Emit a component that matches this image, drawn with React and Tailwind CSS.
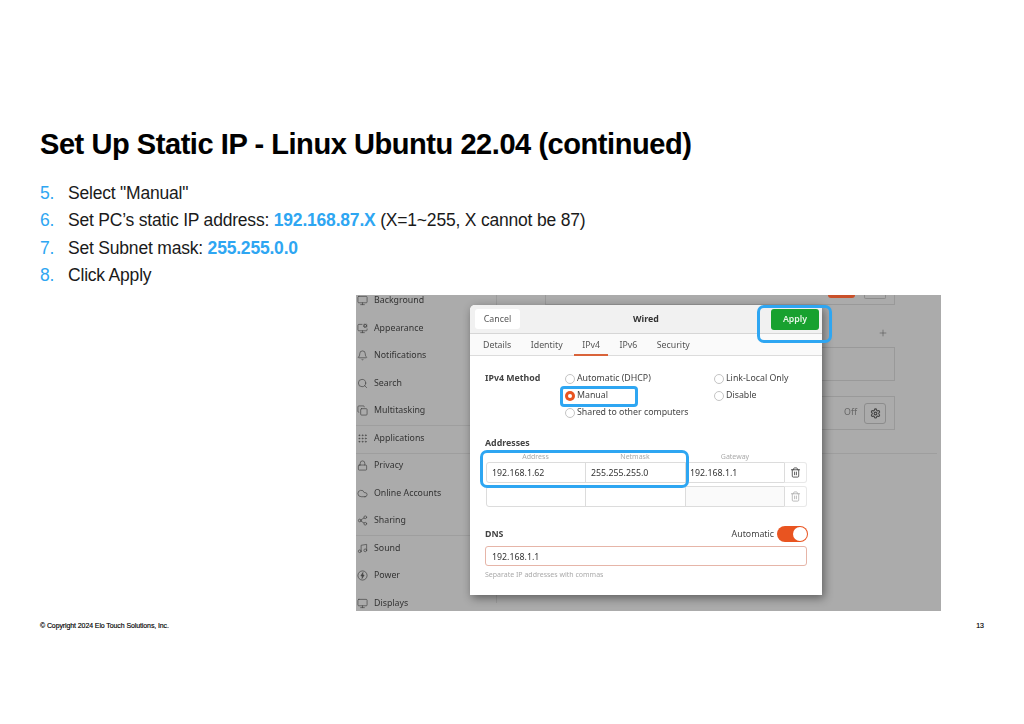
import { Bell, Cloud, Copy, Grip, Lock, Monitor, MonitorCog, Music, Plus, Search, Settings, Share2, Trash2 } from 'lucide-react'

const steps = [
  { n: '5.', body: <>Select "Manual"</> },
  {
    n: '6.',
    body: (
      <>
        Set PC’s static IP address: <b className="font-bold text-[#2ea6f2]">192.168.87.X</b> (X=1~255, X cannot be 87)
      </>
    ),
  },
  { n: '7.', body: <>Set Subnet mask: <b className="font-bold text-[#2ea6f2]">255.255.0.0</b></> },
  { n: '8.', body: <>Click Apply</> },
]

function PowerIcon({ size, className }) {
  return (
    <svg width={size} height={size} viewBox="0 0 24 24" fill="none" stroke="currentColor" strokeWidth="1.6" className={className}>
      <circle cx="12" cy="12" r="10" />
      <path d="M13 5.5 8.5 13H12l-1 5.5 4.5-7.5H12z" fill="currentColor" />
    </svg>
  )
}

const sidebar = [
  { label: 'Background', icon: Monitor },
  { label: 'Appearance', icon: MonitorCog },
  { label: 'Notifications', icon: Bell },
  { label: 'Search', icon: Search },
  { label: 'Multitasking', icon: Copy },
  { label: 'Applications', icon: Grip, divider: true },
  { label: 'Privacy', icon: Lock },
  { label: 'Online Accounts', icon: Cloud },
  { label: 'Sharing', icon: Share2 },
  { label: 'Sound', icon: Music, divider: true },
  { label: 'Power', icon: PowerIcon },
  { label: 'Displays', icon: Monitor },
]

function Radio({ checked, label }) {
  return (
    <div className="flex items-center gap-[2px] h-[17px]">
      {checked ? (
        <span className="w-[10px] h-[10px] rounded-full bg-[#e95420] flex items-center justify-center">
          <span className="w-[4px] h-[4px] rounded-full bg-white" />
        </span>
      ) : (
        <span className="w-[10px] h-[10px] rounded-full border border-[#c4c4c4] bg-white" />
      )}
      <span>{label}</span>
    </div>
  )
}

function AddressRow({ values, faded }) {
  return (
    <div className="flex h-[21px]">
      <div className="flex flex-1 rounded-l-[3px] border border-[#dcdcdc] text-[8.8px] text-[#333]">
        <div className="w-[99px] border-r border-[#dcdcdc] pl-[5px] leading-[20px]">{values[0]}</div>
        <div className="w-[100px] border-r border-[#dcdcdc] pl-[5px] leading-[20px]">{values[1]}</div>
        <div className={`flex-1 pl-[4px] leading-[20px] ${faded ? 'bg-[#fafafa]' : ''}`}>{values[2]}</div>
      </div>
      <div className="w-[22px] border border-l-0 border-[#e8e8e8] rounded-r-[3px] flex items-center justify-center">
        <Trash2 size={11} strokeWidth={1.7} className={faded ? 'text-[#aaa]' : 'text-[#333]'} />
      </div>
    </div>
  )
}

function WiredDialog() {
  return (
    <div className="absolute left-[114px] top-[10px] w-[352px] h-[290px] bg-white rounded-t-[5px] shadow-[2px_3px_10px_rgba(0,0,0,0.45)] text-[#444] text-[8.8px]">
      <div className="relative flex items-center justify-between h-[29px] pl-[5px] pr-[3px] bg-[#f1f1f1] border-b border-[#d6d6d6] rounded-t-[5px]">
        <div className="w-[45px] h-[20px] pt-[2px] rounded-[3px] bg-white flex items-center justify-center text-[#555]">Cancel</div>
        <div className="absolute left-[163px] top-[8px] font-bold text-[#333]">Wired</div>
        <div className="w-[48px] h-[21px] pt-[1px] rounded-[3px] bg-[#18a12f] flex items-center justify-center text-[#e6f5e6] font-semibold">Apply</div>
      </div>

      <div className="flex h-[22px] pt-[3px] items-center gap-[19.5px] pl-[13px] bg-[#fafafa] border-b border-[#dcdcdc] text-[#555]">
        <span>Details</span>
        <span>Identity</span>
        <span className="relative">
          IPv4
          <span className="absolute left-[-8px] right-[-8px] top-[15px] h-[2px] bg-[#d9633a]" />
        </span>
        <span>IPv6</span>
        <span>Security</span>
      </div>

      <div className="px-[15px]">
        <div className="flex pt-[14px]">
          <div className="w-[80px] font-bold text-[#444] leading-[17px]">IPv4 Method</div>
          <div className="w-[149px]">
            <Radio label="Automatic (DHCP)" />
            <Radio checked label="Manual" />
            <Radio label="Shared to other computers" />
          </div>
          <div>
            <Radio label="Link-Local Only" />
            <Radio label="Disable" />
          </div>
        </div>

        <div className="mt-[16px] font-bold leading-[12px] text-[#444]">Addresses</div>
        <div className="flex mt-[3px] text-[7px] text-[#aaa] leading-[10px] text-center pl-[1px]">
          <div className="w-[99px]">Address</div>
          <div className="w-[100px]">Netmask</div>
          <div className="w-[100px]">Gateway</div>
        </div>
        <div className="pl-[1px] flex flex-col gap-[3px]">
          <AddressRow values={['192.168.1.62', '255.255.255.0', '192.168.1.1']} />
          <AddressRow faded values={['', '', '']} />
        </div>

        <div className="flex items-center justify-between h-[16px] mt-[19px]">
          <span className="font-bold pt-[2px]">DNS</span>
          <div className="flex items-center gap-[3px] -mr-[1px]">
            <span className="pt-[2px]">Automatic</span>
            <span className="w-[31px] h-[16px] rounded-full bg-[#e95420] flex justify-end items-center pr-[1px]">
              <span className="w-[14px] h-[14px] rounded-full bg-white" />
            </span>
          </div>
        </div>
        <div className="mt-[4px] h-[20px] border border-[#e6b5a8] rounded-[3px] pl-[6px] leading-[20px] text-[#333]">192.168.1.1</div>
        <div className="mt-[4px] text-[7px] text-[#aaa] leading-[10px]">Separate IP addresses with commas</div>
      </div>
    </div>
  )
}

function ScreenshotPanel() {
  return (
    <div className="relative ml-[356px] w-[585px] h-[316px] overflow-hidden bg-[#ababab] font-['Noto_Sans','Open_Sans',sans-serif] blur-[0.5px]">
      <div className="flex h-full">
        <div className="w-[141px] h-full border-r border-[#9c9c9c] -mt-[8px] shrink-0 text-[8.8px] text-[#333]">
          {sidebar.map((item) => {
            const Icon = item.icon
            return (
              <div key={item.label} className={`flex items-center h-[27.5px] pl-[1px] gap-[6px] ${item.divider ? 'border-t border-[#9e9e9e]' : ''}`}>
                <Icon size={11} strokeWidth={1.5} className="text-[#444]" />
                <span>{item.label}</span>
              </div>
            )
          })}
        </div>
        <div className="flex-1 pl-[48px] pr-[46px] text-[8.8px] text-[#666]">
          <div className="h-[10px] border border-t-0 border-[#999] flex justify-end items-start pr-[8px] gap-[9px]">
            <span className="w-[27px] h-[3px] rounded-b-full bg-[#c9502a]" />
            <span className="w-[22px] h-[4px] border border-t-0 border-[#8c8c8c] rounded-b-[2px]" />
          </div>
          <div className="flex justify-end pr-[7px] mt-[23px] h-[19px]">
            <Plus size={10} strokeWidth={1.2} className="text-[#444]" />
          </div>
          <div className="h-[34px] border border-[#999]" />
          <div className="mt-[15px] h-[34px] border border-[#999] flex items-center justify-end gap-[7px] pr-[8px]">
            <span>Off</span>
            <span className="w-[22px] h-[21px] rounded-[3px] border border-[#8c8c8c] flex items-center justify-center">
              <Settings size={11} strokeWidth={2.4} className="text-[#444]" />
            </span>
          </div>
        </div>
      </div>
      <span className="absolute left-0 right-[4px] top-[158px] h-px bg-[#9e9e9e]" />
      <WiredDialog />
      <span className="absolute left-[401px] top-[10px] w-[75px] h-[38px] rounded-[7px] border-[3px] border-[#2ea6f2]" />
      <span className="absolute left-[204px] top-[91px] w-[78px] h-[21px] rounded-[4px] border-[3px] border-[#2ea6f2]" />
      <span className="absolute left-[124px] top-[155px] w-[209px] h-[38px] rounded-[7px] border-[3px] border-[#2ea6f2]" />
    </div>
  )
}

export default function App() {
  return (
    <div className="w-[1024px] h-[724px] bg-white text-black font-['Liberation_Sans',Arial,sans-serif] overflow-hidden">
      <h1 className="pt-[127px] pl-[40px] text-[29px] leading-[34px] font-bold tracking-[-0.44px] [-webkit-text-stroke:0.1px_black]">
        Set Up Static IP - Linux Ubuntu 22.04 (continued)
      </h1>

      <ol className="mt-[19px] pl-[40px] text-[17.5px] leading-[27.33px] text-[#1a1a1a] tracking-[-0.2px]">
        {steps.map((step) => (
          <li key={step.n} className="flex">
            <span className="w-[28px] text-[#2ea6f2]">{step.n}</span>
            <span>{step.body}</span>
          </li>
        ))}
      </ol>

      <div className="mt-[5.7px]">
        <ScreenshotPanel />
      </div>

      <div className="flex justify-between pl-[40px] pr-[40px] mt-[10px] text-[7px] leading-[10px] font-medium [-webkit-text-stroke:0.15px_black]">
        <span className="tracking-[-0.1px]">© Copyright 2024 Elo Touch Solutions, Inc.</span>
        <span>13</span>
      </div>
    </div>
  )
}
